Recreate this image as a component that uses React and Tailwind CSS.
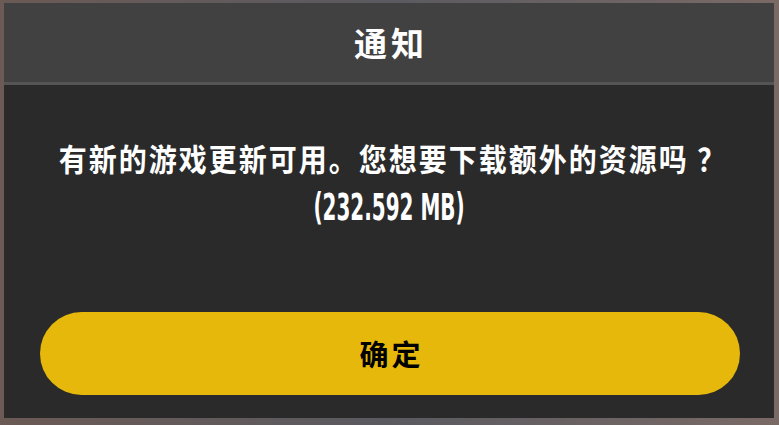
export default function App() {
  return (
    <div className="w-[779px] h-[425px] overflow-hidden bg-gradient-to-r from-[#6b5a55] via-[#5a5a60] to-[#7a6a66] pt-[3px] pl-[4px] pr-[5px] pb-[7px]">
      <div className="w-full h-full flex flex-col bg-[#2a2a2a]" style={{ fontFamily: '"Noto Sans CJK SC", "Noto Sans", sans-serif' }}>
        <div className="h-[82px] shrink-0 bg-[#414141] flex items-center justify-center border-b-[3px] border-[#555555]">
          <span className="text-white font-bold text-[33px] leading-none tracking-[4px] pl-[4px]">通知</span>
        </div>
        <div className="flex-1 flex flex-col items-center">
          <div className="mt-[56px] text-white font-bold text-[28px] leading-[34px] tracking-[2px] whitespace-nowrap scale-y-110 pl-[8px]">
            有新的游戏更新可用。您想要下载额外的资源吗 ？
          </div>
          <div
            className="mt-[16px] text-white font-bold text-[37px] leading-[34px] scale-x-[0.6] whitespace-nowrap"
            style={{ fontFamily: '"Liberation Sans Narrow", "DejaVu Sans Condensed", "Liberation Sans", sans-serif' }}
          >
            (232.592 MB)
          </div>
          <div className="flex-1" />
          <button className="w-[700px] h-[83px] mb-[23px] ml-[2px] rounded-full bg-[#e5b80b] flex items-center justify-center">
            <span className="text-black font-bold text-[29px] leading-none tracking-[3px] pl-[3px]">确定</span>
          </button>
        </div>
      </div>
    </div>
  );
}
